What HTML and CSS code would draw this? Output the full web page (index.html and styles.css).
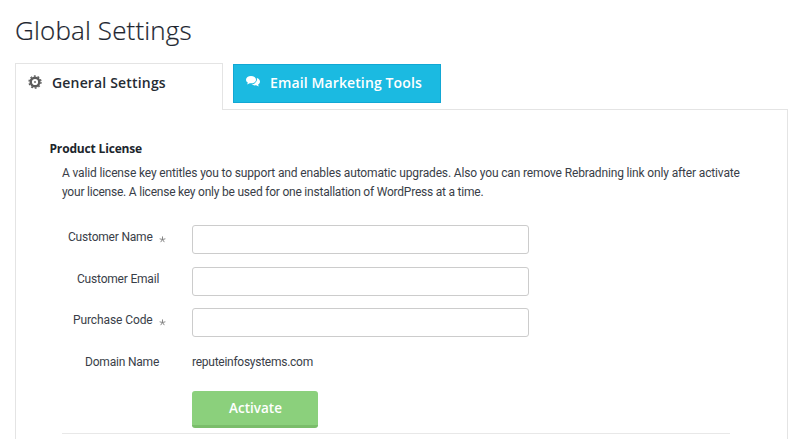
FILE: index.html
```html
<!DOCTYPE html>
<html lang="en">
<head>
<meta charset="utf-8">
<title>Global Settings</title>
<link rel="stylesheet" href="styles.css">
</head>
<body>
<main class="page">
  <h1 class="title">Global Settings</h1>
  <nav class="tabs">
    <a class="tab tab-active">
      <svg class="gear" viewBox="0 0 14 14"><g fill="none" stroke="#5c5c5c"><circle cx="7" cy="7" r="6" stroke-width="1.3" stroke-dasharray="1.9 1.870"/><circle cx="7" cy="7" r="4.3" stroke-width="2.400"/></g><circle cx="7" cy="7" r="1.100" fill="#777"/></svg>
      <span class="general-text">General Settings</span>
    </a>
    <a class="tab tab-blue">
      <svg class="chat" viewBox="0 0 14 11"><path d="M5 0C2.2 0 0 1.6 0 3.7c0 1.2.7 2.2 1.800 2.900L1.200 8.500 3.700 7.300C7.200 7.700 10 6.100 10 3.700 10 1.600 7.800 0 5 0zM10.800 2.100c.9 3.200-1.700 6-5.300 6.200 1.200 1 2.900 1.300 4.600 1l2.600 1.300-.6-2c1.200-.7 1.900-1.600 1.900-2.800 0-1.700-1.200-3.100-3.200-3.700z" fill="#fff"/></svg>
      <span class="email-text">Email Marketing Tools</span>
    </a>
  </nav>
  <section class="panel">
    <h2 class="section-title">Product License</h2>
    <p class="intro"><span class="line-one">A valid license key entitles you to support and enables automatic upgrades. Also you can remove Rebradning link only after activate</span><br><span class="line-two">your license. A license key only be used for one installation of WordPress at a time.</span></p>
    <form class="form">
      <label class="name" for="name"><span>Customer Name</span><svg class="star" viewBox="0 0 8 8"><path d="M4 .5V4M.7 3.200 4 4 7.300 3.200M4 4 1.900 7M4 4l2.100 3"/></svg></label>
      <input id="name" type="text">
      <label class="email" for="email"><span>Customer Email</span></label>
      <input id="email" type="text">
      <label class="code" for="code"><span>Purchase Code</span><svg class="star" viewBox="0 0 8 8"><path d="M4 .5V4M.7 3.200 4 4 7.300 3.200M4 4 1.900 7M4 4l2.100 3"/></svg></label>
      <input id="code" type="text">
      <label class="domain"><span>Domain Name</span></label>
      <span class="site">reputeinfosystems.com</span>
      <button class="activate" type="button">Activate</button>
    </form>
    <hr class="rule">
  </section>
</main>
</body>
</html>
```
FILE: styles.css
```css
* { box-sizing: border-box; }
html { overflow: hidden; }
body {
  margin: 0;
  background: #fff;
  color: #393e48;
  font: 12px/19px Roboto, sans-serif;
}
.page {
  height: 439px;
  padding: 0 12px 0 15px;
  overflow: hidden;
}
.title {
  height: 63px;
  margin: 0;
  padding-top: 12px;
  color: #20252f;
  font: 300 26px/36px "Open Sans", sans-serif;
  letter-spacing: 0.15px;
  -webkit-text-stroke: 0.2px #20252f;
}
.tabs {
  display: flex;
  gap: 10px;
  height: 46px;
}
.tab {
  display: flex;
  align-items: center;
  width: 208px;
  font: 600 14px/20px "Open Sans", sans-serif;
  white-space: nowrap;
}
.tab-active {
  position: relative;
  z-index: 1;
  height: 47px;
  padding: 0 0 8px 13px;
  border: 1px solid #e4e4e4;
  border-bottom: 0;
  background: #fff;
  color: #252b33;
}
.tab-blue {
  height: 39px;
  margin-top: 1px;
  padding: 0 0 2px 12px;
  border: 1px solid #12a7d4;
  background: #1bbae1;
  color: #fff;
}
.general-text { letter-spacing: 0.17px; }
.email-text { letter-spacing: 0.12px; }
.gear { width: 14px; height: 14px; margin: -3px 10px 0 -1px; }
.chat { width: 14px; height: 11px; margin: -2px 10px 0 0; }
.panel {
  height: 340px;
  padding: 29px 57px 0 34px;
  border: 1px solid #e4e4e4;
}
.section-title {
  margin: 0 0 0 -0.5px;
  color: #20252c;
  font: 700 12px/19px "Open Sans", sans-serif;
  letter-spacing: -0.17px;
}
.intro {
  margin: 6px 0 0 12px;
  white-space: nowrap;
}
.line-one { letter-spacing: -0.147px; }
.line-two { letter-spacing: -0.22px; }
.form {
  display: grid;
  grid-template-columns: 118px 337px;
  grid-template-rows: 42px 41px 42px 40px 38px;
  column-gap: 24px;
  margin-top: 23px;
}
label { padding-top: 3px; white-space: nowrap; letter-spacing: -0.2px; }
.name { padding-left: 18px; }
.email { padding-left: 27px; }
.code { padding-left: 23px; letter-spacing: -0.1px; }
.domain { padding-left: 35px; }
.star {
  width: 7px;
  height: 7px;
  margin: 0 0 -2px 6px;
  fill: none;
  stroke: #777;
}
input {
  width: 337px;
  height: 29px;
  padding: 0 8px;
  border: 1px solid #ccc;
  border-radius: 3px;
  background: #fff;
}
.site { padding-top: 3px; letter-spacing: -0.26px; }
.activate {
  grid-column: 2;
  width: 126px;
  height: 37px;
  margin-top: 1px;
  padding: 0 0 1px 1px;
  border: 0;
  border-bottom: 3px solid #7abd6a;
  border-radius: 3px;
  background: #8bd07c;
  color: #fff;
  font: 600 13.500px/20px "Open Sans", sans-serif;
}
.rule {
  width: 668px;
  height: 1px;
  margin: 5px 0 0 12px;
  border: 0;
  background: #e8e8e8;
}
```
